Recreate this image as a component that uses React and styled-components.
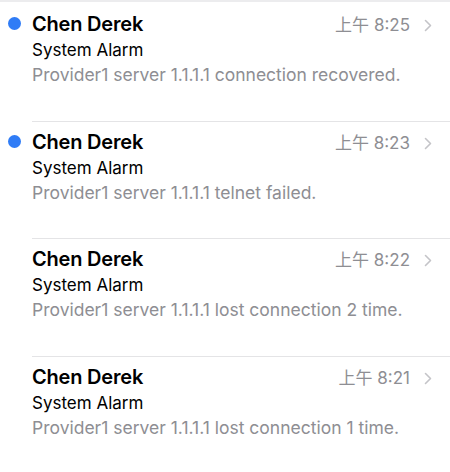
import React from 'react'
import styled, { createGlobalStyle } from 'styled-components'

const GlobalStyle = createGlobalStyle`
  body {
    margin: 0;
    background: #fff;
    font-family: Inter, "Liberation Sans", "Noto Sans CJK SC", sans-serif;
  }
`

const List = styled.div`
  width: 450px;
  height: 472px;
  overflow: hidden;
  padding-top: 2px;
  border-top: 2px solid #ececee;
  box-sizing: border-box;
`

const Row = styled.div`
  display: grid;
  grid-template-columns: 32px 1fr auto 40px;
  height: 116.5px;
  box-sizing: border-box;
  padding-top: 7px;
`

const Separator = styled.div`
  height: 1px;
  margin-left: 32px;
  background: #e4e4e6;
`

const DotCell = styled.div`
  display: flex;
  justify-content: center;
  padding-top: 6px;
  padding-right: 3px;
`

const Dot = styled.span`
  width: 13px;
  height: 13px;
  border-radius: 50%;
  background: ${p => (p.$unread ? '#2f7cf6' : 'transparent')};
`

const Body = styled.div`
  display: flex;
  flex-direction: column;
  min-width: 0;
`

const Name = styled.div`
  font-size: 20px;
  font-weight: 600;
  color: #000;
  line-height: 26px;
  letter-spacing: -0.2px;
`

const Subject = styled.div`
  font-size: 17px;
  color: #000;
  line-height: 26px;
`

const Preview = styled.div`
  font-size: 17.5px;
  color: #8e8e93;
  line-height: 24px;
  white-space: nowrap;
`

const Time = styled.div`
  font-size: 17px;
  color: #8e8e93;
  line-height: 26px;
  padding-top: 1px;
`

const Chevron = styled.div`
  padding-top: 5px;
  padding-left: 14px;
`

const items = [
  { time: '8:25', text: 'Provider1 server 1.1.1.1 connection recovered.', unread: true },
  { time: '8:23', text: 'Provider1 server 1.1.1.1 telnet failed.', unread: true },
  { time: '8:22', text: 'Provider1 server 1.1.1.1 lost connection 2 time.', unread: false },
  { time: '8:21', text: 'Provider1 server 1.1.1.1 lost connection 1 time.', unread: false }
]

const App = () => (
  <>
    <GlobalStyle />
    <List>
      {items.map((item, i) => (
        <React.Fragment key={item.time}>
          <Row>
            <DotCell>
              <Dot $unread={item.unread} />
            </DotCell>
            <Body>
              <Name>Chen Derek</Name>
              <Subject>System Alarm</Subject>
              <Preview>{item.text}</Preview>
            </Body>
            <Time>上午 {item.time}</Time>
            <Chevron>
              <svg width="8" height="13" viewBox="0 0 8 13">
                <path d="M1.5 1.5 L6.5 6.5 L1.5 11.5" fill="none" stroke="#c4c4c8" strokeWidth="1.6" strokeLinecap="round" strokeLinejoin="round" />
              </svg>
            </Chevron>
          </Row>
          {i < items.length - 1 && <Separator />}
        </React.Fragment>
      ))}
    </List>
  </>
)

export default App
